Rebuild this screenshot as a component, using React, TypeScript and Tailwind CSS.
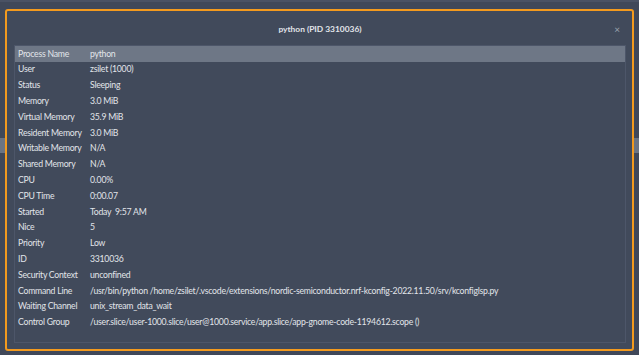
const rows: [string, string][] = [
  ['User', 'zsilet (1000)'],
  ['Status', 'Sleeping'],
  ['Memory', '3.0 MiB'],
  ['Virtual Memory', '35.9 MiB'],
  ['Resident Memory', '3.0 MiB'],
  ['Writable Memory', 'N/A'],
  ['Shared Memory', 'N/A'],
  ['CPU', '0.00%'],
  ['CPU Time', '0:00.07'],
  ['Started', 'Today  9:57 AM'],
  ['Nice', '5'],
  ['Priority', 'Low'],
  ['ID', '3310036'],
  ['Security Context', 'unconfined'],
  ['Command Line', '/usr/bin/python /home/zsilet/.vscode/extensions/nordic-semiconductor.nrf-kconfig-2022.11.50/srv/kconfiglsp.py'],
  ['Waiting Channel', 'unix_stream_data_wait'],
  ['Control Group', '/user.slice/user-1000.slice/user@1000.service/app.slice/app-gnome-code-1194612.scope ()'],
];

function Row({ label, value, head }: { label: string; value: string; head?: boolean }) {
  return (
    <div className={`flex items-center h-[15.8px] whitespace-pre ${head ? 'bg-[#6e7786]' : ''}`}>
      <div className="w-[75px] pl-[3px] shrink-0">{label}</div>
      <div>{value}</div>
    </div>
  );
}

export default function App() {
  return (
    <div
      className="relative w-[639px] h-[355px] bg-[#404859] overflow-hidden text-[#e2e5ea]"
      style={{ fontFamily: "Lato, 'Noto Sans', sans-serif" }}
    >
      {/* list row of the window underneath */}
      <div className="absolute left-0 right-0 top-[138px] h-[15px] bg-[#6b7483]" />
      <div className="absolute left-0 right-0 top-0 h-[2px] bg-[#4a5264]" />

      <div className="relative ml-[5px] mt-[9px] w-[629px] h-[342px] border-2 border-[#f39a1e] rounded-[3px] bg-[#414a5b] flex flex-col pl-[7px] pr-[6px]">
        <div className="relative h-[22px] flex items-end justify-center text-[8.4px] font-bold leading-none">
          python (PID 3310036)
          <span className="absolute right-[6px] bottom-[-1px] text-[10px] text-[#9aa2ae] font-normal">×</span>
        </div>
        <div className="mt-[12px] h-[298px] border border-[#4d5669] text-[8.7px] tracking-[-0.25px] leading-none">
          <Row label="Process Name" value="python" head />
          {rows.map(([l, v]) => (
            <Row key={l} label={l} value={v} />
          ))}
        </div>
      </div>
    </div>
  );
}
